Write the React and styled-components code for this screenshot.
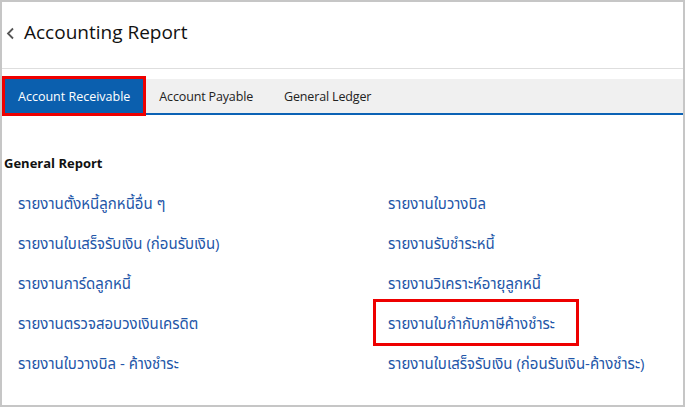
import React from "react";
import styled, { createGlobalStyle } from "styled-components";

const GlobalStyle = createGlobalStyle`
    html, body {
        margin: 0;
        padding: 0;
        background: #ffffff;
    }
    body {
        font-family: "Open Sans", "Noto Sans Thai", "Noto Sans", sans-serif;
    }
`;

const Frame = styled.div`
    width: 685px;
    height: 407px;
    box-sizing: border-box;
    border: 2px solid #c6c6c6;
    background: #fff;
    overflow: hidden;
`;

const Header = styled.div`
    height: 67px;
    box-sizing: border-box;
    display: flex;
    align-items: flex-start;
    padding: 17px 0 0 4px;
    border-bottom: 1px solid #dedede;
    gap: 9px;
`;

const BackIcon = styled.svg`
    width: 9px;
    height: 13px;
    margin-top: 8px;
`;

const Title = styled.h1`
    margin: 0;
    font-size: 19px;
    font-weight: 400;
    color: #111;
    line-height: 26px;
`;

const TabBar = styled.div`
    margin-top: 10px;
    height: 36px;
    box-sizing: border-box;
    display: flex;
    align-items: stretch;
    padding-left: 3px;
    background: #f0f0f0;
    border-bottom: 2px solid #0b62b5;
`;

const Tab = styled.div`
    display: flex;
    align-items: center;
    padding: 0 ${(p) => (p.$active ? "13px" : "15px")};
    margin-left: ${(p) => (p.$active ? "0" : "1px")};
    font-size: 12.5px;
    letter-spacing: ${(p) => (p.$active ? "0" : "-0.15px")};
    color: ${(p) => (p.$active ? "#fff" : "#222")};
    background: ${(p) => (p.$active ? "#0b5fae" : "transparent")};
    outline: ${(p) => (p.$active ? "3px solid #ee0000" : "none")};
    position: relative;
`;

const Content = styled.div`
    padding: 39px 0 0 2px;
`;

const SectionTitle = styled.h2`
    margin: 0 0 11px 0;
    font-size: 13px;
    font-weight: 700;
    color: #111;
    line-height: 18px;
`;

const LinkGrid = styled.div`
    display: grid;
    grid-template-columns: 370px 1fr;
    grid-auto-rows: 40px;
    margin-left: 2px;
`;

const Cell = styled.div`
    display: flex;
    align-items: flex-start;
`;

const ReportLink = styled.a`
    display: inline-block;
    box-sizing: border-box;
    padding: 10px 6px 10px 12px;
    line-height: 20px;
    font-size: 15px;
    color: #2356a8;
    text-decoration: none;
    white-space: nowrap;
    cursor: pointer;
    outline: ${(p) => (p.$highlighted ? "3px solid #ee0000" : "none")};
    ${(p) =>
        p.$highlighted &&
        "width: 200px; padding-top: 11px; padding-bottom: 10px; margin-top: -1px;"}
`;

const tabs = ["Account Receivable", "Account Payable", "General Ledger"];

const leftLinks = [
    "รายงานตั้งหนี้ลูกหนี้อื่น ๆ",
    "รายงานใบเสร็จรับเงิน (ก่อนรับเงิน)",
    "รายงานการ์ดลูกหนี้",
    "รายงานตรวจสอบวงเงินเครดิต",
    "รายงานใบวางบิล - ค้างชำระ",
];

const rightLinks = [
    "รายงานใบวางบิล",
    "รายงานรับชำระหนี้",
    "รายงานวิเคราะห์อายุลูกหนี้",
    "รายงานใบกำกับภาษีค้างชำระ",
    "รายงานใบเสร็จรับเงิน (ก่อนรับเงิน-ค้างชำระ)",
];

const App = () => {
    return (
        <>
            <GlobalStyle />
            <Frame>
                <Header>
                    <BackIcon viewBox="0 0 9 13">
                        <path d="M7 1.5 L2 6.5 L7 11.5" fill="none" stroke="#555" strokeWidth="1.8" />
                    </BackIcon>
                    <Title>Accounting Report</Title>
                </Header>
                <TabBar>
                    {tabs.map((t, i) => (
                        <Tab key={t} $active={i === 0}>
                            {t}
                        </Tab>
                    ))}
                </TabBar>
                <Content>
                    <SectionTitle>General Report</SectionTitle>
                    <LinkGrid>
                        {leftLinks.map((l, i) => (
                            <React.Fragment key={l}>
                                <Cell>
                                    <ReportLink>{l}</ReportLink>
                                </Cell>
                                <Cell>
                                    <ReportLink $highlighted={i === 3}>{rightLinks[i]}</ReportLink>
                                </Cell>
                            </React.Fragment>
                        ))}
                    </LinkGrid>
                </Content>
            </Frame>
        </>
    );
};

export default App;
